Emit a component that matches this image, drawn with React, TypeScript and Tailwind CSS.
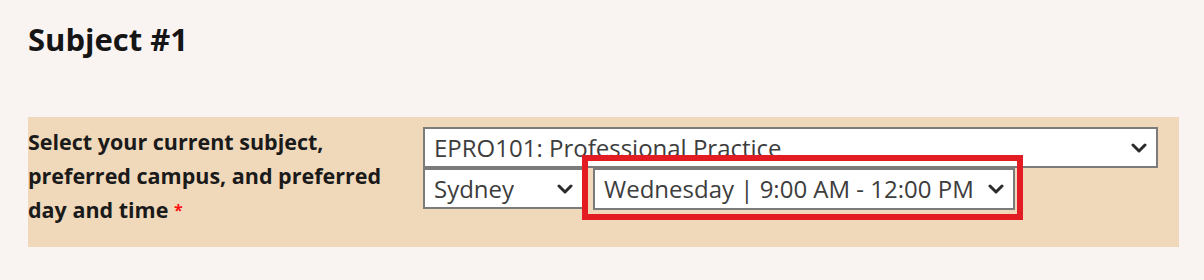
import React from "react";

function Chevron() {
  return (
    <svg width="16" height="10" viewBox="0 0 16 10" className="shrink-0">
      <path d="M2 2 L8 8 L14 2" fill="none" stroke="#2b2b2b" strokeWidth="3" strokeLinecap="round" strokeLinejoin="round" />
    </svg>
  );
}

function FakeSelect({ value, className }: { value: string; className: string }) {
  return (
    <div
      className={`flex items-center justify-between bg-white border-2 border-[#7b7b7b] pl-[9px] pr-[9px] text-[24px] text-[#3d3d3d] ${className}`}
      style={{ fontFamily: '"Open Sans", "Noto Sans", sans-serif' }}
    >
      <span className="truncate">{value}</span>
      <Chevron />
    </div>
  );
}

export default function App() {
  return (
    <main className="min-h-[280px] bg-[#f9f4f1] px-[28px] pt-[19px]" style={{ fontFamily: '"Open Sans", "Noto Sans", sans-serif' }}>
      <h2 className="text-[31px] font-bold leading-[40px] text-[#151515]">Subject #1</h2>

      <section className="mt-[58px] w-[1151px] h-[130px] bg-[#f0d9ba] flex pt-[8px]">
        <label className="w-[395px] shrink-0 text-[21.5px] font-bold leading-[34px] text-[#1a1a1a]">
          Select your current subject,
          <br />
          preferred campus, and preferred
          <br />
          day and time <span className="text-[#ff1010] text-[16px] align-top">*</span>
        </label>

        <div className="flex flex-col pt-[2px]">
          <FakeSelect value="EPRO101: Professional Practice" className="w-[735px] h-[41px]" />
          <div className="flex gap-[9px]">
            <FakeSelect value="Sydney" className="w-[161px] h-[41px]" />
            <div className="relative">
              <FakeSelect value="Wednesday | 9:00 AM - 12:00 PM" className="w-[422px] h-[42px]" />
              <span className="absolute -left-[11px] -top-[13px] -right-[8px] -bottom-[10px] border-[6px] border-[#e31b22] pointer-events-none" />
            </div>
          </div>
        </div>
      </section>
    </main>
  );
}
